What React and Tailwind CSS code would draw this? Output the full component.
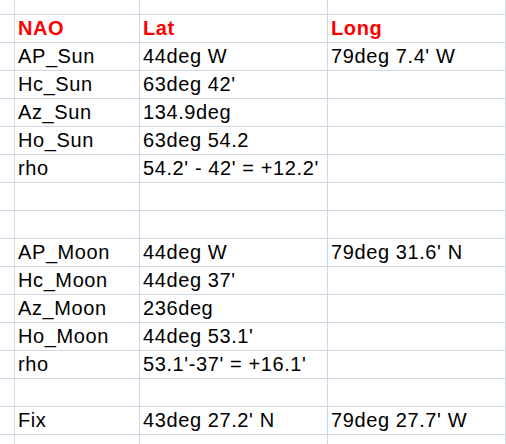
import React from "react";

const rows = [
  ["NAO", "Lat", "Long", true],
  ["AP_Sun", "44deg W", "79deg 7.4' W"],
  ["Hc_Sun", "63deg 42'", ""],
  ["Az_Sun", "134.9deg", ""],
  ["Ho_Sun", "63deg 54.2", ""],
  ["rho", "54.2' - 42' = +12.2'", ""],
  ["", "", ""],
  ["", "", ""],
  ["AP_Moon", "44deg W", "79deg 31.6' N"],
  ["Hc_Moon", "44deg 37'", ""],
  ["Az_Moon", "236deg", ""],
  ["Ho_Moon", "44deg 53.1'", ""],
  ["rho", "53.1'-37' = +16.1'", ""],
  ["", "", ""],
  ["Fix", "43deg 27.2' N", "79deg 27.7' W"],
  ["", "", ""],
];

function Row({ cells, head, h = "h-[28px]" }) {
  const txt = head
    ? "font-bold text-[#ff0000]"
    : "text-black";
  const cell = `border-b border-r border-[#d0d7e5] pl-[3px] pt-[2px] leading-[22px] whitespace-nowrap overflow-hidden ${txt}`;
  return (
    <div className={`flex ${h}`}>
      <div className="w-[15px] shrink-0 border-b border-r border-[#d0d7e5]" />
      <div className={`w-[125px] shrink-0 ${cell}`}>{cells[0]}</div>
      <div className={`w-[188px] shrink-0 ${cell}`}>{cells[1]}</div>
      <div className={`flex-1 ${cell}`}>{cells[2]}</div>
    </div>
  );
}

export default function App() {
  return (
    <div
      className="w-[506px] h-[444px] overflow-hidden bg-white text-[20px] tracking-[0.6px]"
      style={{ fontFamily: '"Liberation Sans", Arial, sans-serif' }}
    >
      <Row cells={["", "", ""]} h="h-[15px]" />
      {rows.map((r, i) => (
        <Row key={i} cells={r} head={r[3]} />
      ))}
    </div>
  );
}
